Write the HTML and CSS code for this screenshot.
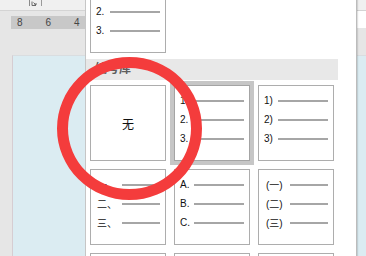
FILE: index.html
```html
<!DOCTYPE html>
<html lang="zh-CN">
<head>
  <meta charset="UTF-8">
  <title>编号库</title>
  <link rel="stylesheet" href="styles.css">
</head>
<body>
  <div class="app">
    <div class="toolbar">
      <svg class="launcher" width="10" height="7" viewBox="0 0 10 7">
        <path d="M0.5 0v6" stroke="#8a8a8a" fill="none"/>
        <path d="M3 1.5v4h4" stroke="#6a6a6a" fill="none"/>
        <path d="M4.5 2.5l2.5 2.5M7 3v2H5" stroke="#6a6a6a" fill="none"/>
      </svg>
      <span class="sep"></span>
    </div>
    <div class="rulerbar">
      <div class="ruler"><span>8</span><span>6</span><span>4</span></div>
      <div class="ruler-end"></div>
    </div>
    <div class="workspace">
      <div class="page"></div>
    </div>
  </div>

  <div class="panel">
    <div class="grid grid-top">
      <div class="item">
        <div class="row"><span class="num">1.</span><span class="line"></span></div>
        <div class="row"><span class="num">2.</span><span class="line"></span></div>
        <div class="row"><span class="num">3.</span><span class="line"></span></div>
      </div>
    </div>

    <div class="section-title">编号库</div>

    <div class="grid">
      <div class="item item-none">无</div>
      <div class="item selected">
        <div class="row"><span class="num">1.</span><span class="line"></span></div>
        <div class="row"><span class="num">2.</span><span class="line"></span></div>
        <div class="row"><span class="num">3.</span><span class="line"></span></div>
      </div>
      <div class="item">
        <div class="row"><span class="num">1)</span><span class="line"></span></div>
        <div class="row"><span class="num">2)</span><span class="line"></span></div>
        <div class="row"><span class="num">3)</span><span class="line"></span></div>
      </div>
      <div class="item">
        <div class="row"><span class="num cjk">一、</span><span class="line short"></span></div>
        <div class="row"><span class="num cjk">二、</span><span class="line short"></span></div>
        <div class="row"><span class="num cjk">三、</span><span class="line short"></span></div>
      </div>
      <div class="item">
        <div class="row"><span class="num">A.</span><span class="line"></span></div>
        <div class="row"><span class="num">B.</span><span class="line"></span></div>
        <div class="row"><span class="num">C.</span><span class="line"></span></div>
      </div>
      <div class="item">
        <div class="row"><span class="num paren">(一)</span><span class="line short"></span></div>
        <div class="row"><span class="num paren">(二)</span><span class="line short"></span></div>
        <div class="row"><span class="num paren">(三)</span><span class="line short"></span></div>
      </div>
      <div class="item"></div>
      <div class="item"></div>
      <div class="item"></div>
    </div>
  </div>

  <div class="ring"></div>
</body>
</html>
```

FILE: styles.css
```css
* {
  margin: 0;
  padding: 0;
  box-sizing: border-box;
}
body {
  position: relative;
  width: 366px;
  height: 256px;
  overflow: hidden;
  font-family: "Liberation Sans", "Noto Sans CJK SC", sans-serif;
  color: #111;
}
/* 背景：文档窗口 */
.toolbar {
  display: flex;
  align-items: flex-start;
  height: 11px;
  padding-left: 29px;
  background-color: #f0f0f0;
  border-bottom: 1px solid #d4d4d4;
}
.launcher {
  display: block;
}
.sep {
  width: 1px;
  height: 6px;
  margin-left: 2px;
  background-color: #9a9a9a;
}
.rulerbar {
  display: flex;
  align-items: flex-start;
  height: 44px;
  background-color: #e6e6e6;
}
.ruler {
  display: flex;
  width: 300px;
  height: 13px;
  margin: 5px 0 0 11px;
  padding-left: 6px;
  background-color: #c8c8c8;
  font-size: 10px;
  line-height: 13px;
  color: #454545;
}
.ruler span {
  width: 28.5px;
}
.ruler-end {
  width: 9px;
  height: 17px;
  margin-left: auto;
  background-color: #fff;
}
.workspace {
  display: flex;
  height: 201px;
  padding-left: 12px;
  background-color: #e6e6e6;
}
.page {
  flex: 1;
  background-color: #dbecf2;
  border-left: 1px solid #d6cdd2;
  border-top: 1px solid #d9dde0;
}
/* 下拉面板 */
.panel {
  position: absolute;
  left: 85px;
  top: 0;
  width: 272px;
  height: 256px;
  background-color: #fff;
  border-left: 1px solid #c6c6c6;
  border-right: 1px solid #bcbcbc;
  box-shadow: 1px 0 1px rgba(0, 0, 0, 0.12);
  overflow: hidden;
}
.grid {
  display: grid;
  grid-template-columns: repeat(3, 76px);
  gap: 8px;
  margin-top: 5px;
  padding-left: 4px;
}
.grid-top {
  margin-top: -23px;
}
.section-title {
  width: 252px;
  height: 21px;
  margin-top: 6px;
  padding-left: 9px;
  background-color: #e8e8e8;
  font-size: 12px;
  font-weight: bold;
  line-height: 21px;
  color: #5e5e5e;
}
.item {
  height: 76px;
  padding: 5px 5px 0 5px;
  background-color: #fff;
  border: 1px solid #adadad;
  font-size: 10px;
}
.item.selected {
  border-color: #a4a4a4;
  outline: 4px solid #c6c6c6;
}
.item-none {
  display: flex;
  align-items: center;
  justify-content: center;
  padding: 0;
  font-size: 12px;
}
.row {
  display: flex;
  align-items: center;
  height: 19px;
}
.num.cjk {
  margin-left: 1px;
}
.num.paren {
  margin-left: 2px;
}
.line {
  width: 50px;
  height: 2px;
  margin-left: auto;
  background-color: #a6a6a6;
}
.line.short {
  width: 38px;
}
/* 标注圈 */
.ring {
  position: absolute;
  left: 57px;
  top: 57px;
  width: 145px;
  height: 143px;
  border: 11px solid #f43c3c;
  border-radius: 50%;
}
```
